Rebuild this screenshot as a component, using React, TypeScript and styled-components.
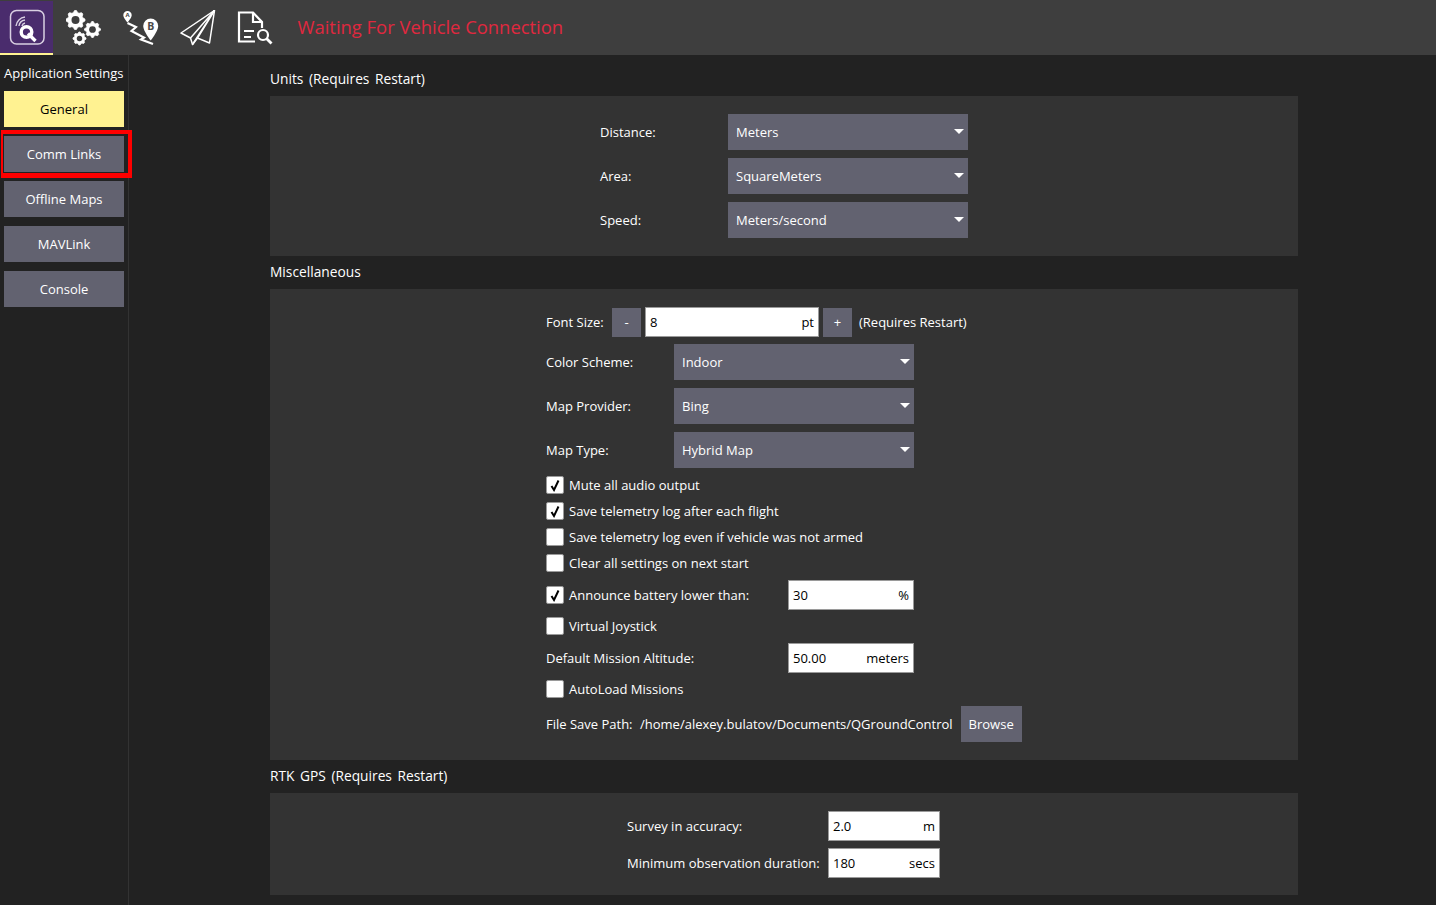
import React from 'react'
import styled, { createGlobalStyle } from 'styled-components'

const GlobalStyle = createGlobalStyle`
  html, body {
    margin: 0;
    padding: 0;
    height: 100%;
    overflow: hidden;
    background: #222222;
  }
  body {
    font-family: "Open Sans", "DejaVu Sans", sans-serif;
    font-size: 13px;
    color: #ffffff;
  }
  * {
    box-sizing: border-box;
  }
`

const LogoIcon = () => (
  <svg width="36" height="36" viewBox="0 0 36 36" fill="none">
    <rect x="1.500" y="1.500" width="33.500" height="33.500" rx="6" stroke="#d9d0e2" strokeWidth="1.500" />
    <circle cx="17.500" cy="23" r="5.300" stroke="#fff" strokeWidth="3.400" />
    <path d="M19 24.500l7.500 7.500" stroke="#fff" strokeWidth="3.400" />
    <path d="M7 17a10 10 0 0 1 9-9M10 17a7 7 0 0 1 6-6M13 17a4 4 0 0 1 3-3" stroke="#d9d0e2" strokeWidth="1.400" />
  </svg>
)

const gearPoints = (cx: number, cy: number, r: number, teeth: number) => {
  const out: string[] = []
  for (let i = 0; i < teeth * 4; i++) {
    const a = ((i - 0.5) / (teeth * 4)) * Math.PI * 2
    const rad = i % 4 < 2 ? r : r * 0.8
    out.push(`${(cx + Math.cos(a) * rad).toFixed(2)},${(cy + Math.sin(a) * rad).toFixed(2)}`)
  }
  return out.join(' ')
}

const Gear = ({ cx, cy, r }: { cx: number; cy: number; r: number }) => (
  <>
    <polygon points={gearPoints(cx, cy, r, 8)} fill="#fff" stroke="#fff" strokeWidth="0.800" strokeLinejoin="round" />
    <circle cx={cx} cy={cy} r={r * 0.42} fill="#3e3e3e" />
  </>
)

const GearsIcon = () => (
  <svg width="36" height="36" viewBox="0 0 36 36">
    <Gear cx={9.500} cy={10} r={9.500} />
    <Gear cx={26.500} cy={19.500} r={8} />
    <Gear cx={13.500} cy={28.500} r={6.500} />
  </svg>
)

const PlanIcon = () => (
  <svg width="36" height="36" viewBox="0 0 36 36" fill="none">
    <path d="M4.500 1a4.200 4.200 0 0 1 4.200 4.200c0 2.500-4.200 7.300-4.200 7.300S.3 7.700.3 5.200A4.200 4.200 0 0 1 4.500 1z" fill="#fff" />
    <text x="4.500" y="7.300" fontFamily="Open Sans" fontSize="6" fontWeight="700" fill="#3e3e3e" textAnchor="middle">A</text>
    <path d="M4.500 13l8.500 4-4.500 4 12.500 6.500-3 2 12 4.500" stroke="#fff" strokeWidth="2.200" />
    <path d="M27.700 8.500a7.500 7.500 0 0 1 7.500 7.500c0 5-7.500 14.500-7.500 14.500S20.200 21 20.200 16a7.500 7.500 0 0 1 7.500-7.500z" fill="#fff" />
    <text x="27.700" y="20.300" fontFamily="Open Sans" fontSize="10.500" fontWeight="700" fill="#4a4a4a" textAnchor="middle">B</text>
  </svg>
)

const PlaneIcon = () => (
  <svg width="36" height="36" viewBox="0 0 36 36" fill="none" stroke="#fff" strokeWidth="1.500" strokeLinejoin="round">
    <path d="M34.500 .5L1 23l9.500 5 2 6.500 5-6.500 12 5z" />
    <path d="M34.500 .5L10.500 28M34.500 .5L12.500 34.500M34.500 .5L17.500 28" />
  </svg>
)

const LogIcon = () => (
  <svg width="36" height="36" viewBox="0 0 36 36" fill="none" stroke="#fff" strokeWidth="2.200">
    <path d="M18 31.500H2V2.500H16L25 12V18" />
    <path d="M16 3V12H25" />
    <path d="M7 21H17M7 27H14" />
    <circle cx="26" cy="25" r="5" />
    <path d="M29.500 28.500L34.500 33.500" strokeWidth="2.800" />
  </svg>
)

const Page = styled.div`
  display: flex;
  flex-direction: column;
  width: 1436px;
  height: 905px;
  overflow: hidden;
`

const Toolbar = styled.div`
  display: flex;
  align-items: center;
  height: 55px;
  flex: none;
  background: #3e3e3e;
`

const LogoButton = styled.div`
  display: flex;
  align-items: center;
  justify-content: center;
  width: 53px;
  height: 54px;
  margin-top: 1px;
  background: #4a2c6d;
  border-bottom: 2px solid #fff291;
`

const ToolButton = styled.div`
  display: flex;
  align-items: center;
  justify-content: center;
  width: 36px;
  height: 36px;
  margin-left: 21px;
  &:nth-child(2) {
    margin-left: 13px;
  }
`

const Status = styled.div`
  margin: -2px 0 0 24.500px;
  font-size: 18.400px;
  color: #e0283e;
`

const Main = styled.div`
  display: flex;
  flex: 1;
  min-height: 0;
`

const Sidebar = styled.div`
  position: relative;
  display: flex;
  flex-direction: column;
  gap: 9px;
  width: 129px;
  flex: none;
  padding: 10px 4px 0;
  border-right: 1px solid #333333;
`

const SidebarTitle = styled.div`
  height: 17px;
  line-height: 17px;
  white-space: nowrap;
`

const NavButton = styled.div<{ $active?: boolean }>`
  display: flex;
  align-items: center;
  justify-content: center;
  width: 120px;
  height: 36px;
  background: ${p => (p.$active ? '#fff291' : '#626270')};
  color: ${p => (p.$active ? '#000000' : '#ffffff')};
`

const Highlight = styled.div`
  position: absolute;
  left: 1px;
  top: 75px;
  width: 131px;
  height: 48px;
  border: 3px solid #ff0000;
  border-width: 4px 4px 5px 2px;
  pointer-events: none;
`

const Content = styled.div`
  display: flex;
  flex-direction: column;
  width: 1028px;
  margin-left: 141px;
  padding-top: 8px;
`

const SectionTitle = styled.div`
  height: 18px;
  margin: 7px 0 8px;
  line-height: 18px;
  font-size: 13.750px;
  word-spacing: 2px;
`

const Panel = styled.div<{ $bottom?: number }>`
  display: flex;
  flex-direction: column;
  align-items: center;
  background: #333333;
  padding: 18px 0 ${p => p.$bottom ?? 18}px;
`

const Stack = styled.div<{ $gap: number; $width?: number; $shift?: number }>`
  display: flex;
  flex-direction: column;
  gap: ${p => p.$gap}px;
  width: ${p => (p.$width ? `${p.$width}px` : 'auto')};
  margin-left: ${p => p.$shift ?? 0}px;
`

const Row = styled.div<{ $gap?: number; $tight?: boolean }>`
  display: flex;
  align-items: center;
  gap: ${p => p.$gap ?? 0}px;
  margin-top: ${p => (p.$tight ? -1 : 0)}px;
`

const Label = styled.div<{ $width?: number; $ml?: number }>`
  width: ${p => (p.$width ? `${p.$width}px` : 'auto')};
  margin-left: ${p => p.$ml ?? 0}px;
  flex: none;
  white-space: nowrap;
`

const ComboBox = styled.div`
  display: flex;
  align-items: center;
  justify-content: space-between;
  width: 240px;
  height: 36px;
  padding: 0 4px 0 8px;
  background: #626270;
`

const Caret = styled.div`
  width: 0;
  height: 0;
  margin-top: -2px;
  border-left: 5.500px solid transparent;
  border-right: 5.500px solid transparent;
  border-top: 5px solid #ffffff;
`

const Combo = ({ value }: { value: string }) => (
  <ComboBox>
    {value}
    <Caret />
  </ComboBox>
)

const FieldBox = styled.div<{ $width: number }>`
  display: flex;
  align-items: center;
  justify-content: space-between;
  width: ${p => p.$width}px;
  height: 30px;
  padding: 0 4px;
  background: #ffffff;
  border: 1px solid #9a9a9a;
  color: #000000;
`

const Field = ({ width, value, unit }: { width: number; value: string; unit: string }) => (
  <FieldBox $width={width}>
    <span>{value}</span>
    <span>{unit}</span>
  </FieldBox>
)

const StepButton = styled.div`
  display: flex;
  align-items: center;
  justify-content: center;
  width: 29px;
  height: 29px;
  background: #626270;
`

const Browse = styled.div`
  display: flex;
  align-items: center;
  justify-content: center;
  width: 61px;
  height: 36px;
  margin-left: 8px;
  background: #626270;
`

const CheckRow = styled.div<{ $tight?: boolean }>`
  display: flex;
  align-items: center;
  gap: 5px;
  height: 18px;
  margin-top: ${p => (p.$tight ? -1 : 0)}px;
`

const Box = styled.div`
  display: flex;
  align-items: center;
  justify-content: center;
  width: 18px;
  height: 18px;
  flex: none;
  background: #ffffff;
  border: 1px solid #9a9a9a;
  border-radius: 2px;
`

const Check = ({ on, tight, children }: { on?: boolean; tight?: boolean; children: React.ReactNode }) => (
  <CheckRow $tight={tight}>
    <Box>
      {on && (
        <svg width="12" height="13" viewBox="0 0 12 13" fill="none">
          <path d="M2.500 7l2.500 4L9.500 1.500" stroke="#000" strokeWidth="2" />
        </svg>
      )}
    </Box>
    {children}
  </CheckRow>
)

export default function App() {
  return (
    <Page>
      <GlobalStyle />
      <Toolbar>
        <LogoButton>
          <LogoIcon />
        </LogoButton>
        <ToolButton><GearsIcon /></ToolButton>
        <ToolButton><PlanIcon /></ToolButton>
        <ToolButton><PlaneIcon /></ToolButton>
        <ToolButton><LogIcon /></ToolButton>
        <Status>Waiting For Vehicle Connection</Status>
      </Toolbar>
      <Main>
        <Sidebar>
          <SidebarTitle>Application Settings</SidebarTitle>
          <NavButton $active>General</NavButton>
          <NavButton>Comm Links</NavButton>
          <NavButton>Offline Maps</NavButton>
          <NavButton>MAVLink</NavButton>
          <NavButton>Console</NavButton>
          <Highlight />
        </Sidebar>
        <Content>
          <SectionTitle>Units (Requires Restart)</SectionTitle>
          <Panel>
            <Stack $gap={8}>
              <Row><Label $width={128}>Distance:</Label><Combo value="Meters" /></Row>
              <Row><Label $width={128}>Area:</Label><Combo value="SquareMeters" /></Row>
              <Row><Label $width={128}>Speed:</Label><Combo value="Meters/second" /></Row>
            </Stack>
          </Panel>
          <SectionTitle>Miscellaneous</SectionTitle>
          <Panel>
            <Stack $gap={8} $width={476}>
              <Row $gap={4}>
                <Label $width={62}>Font Size:</Label>
                <StepButton>-</StepButton>
                <Field width={174} value="8" unit="pt" />
                <StepButton>+</StepButton>
                <Label $ml={3}>(Requires Restart)</Label>
              </Row>
              <Row $tight><Label $width={128}>Color Scheme:</Label><Combo value="Indoor" /></Row>
              <Row><Label $width={128}>Map Provider:</Label><Combo value="Bing" /></Row>
              <Row><Label $width={128}>Map Type:</Label><Combo value="Hybrid Map" /></Row>
              <Check on>Mute all audio output</Check>
              <Check on>Save telemetry log after each flight</Check>
              <Check>Save telemetry log even if vehicle was not armed</Check>
              <Check>Clear all settings on next start</Check>
              <Row>
                <Label $width={242}><Check on>Announce battery lower than:</Check></Label>
                <Field width={126} value="30" unit="%" />
              </Row>
              <Check tight>Virtual Joystick</Check>
              <Row>
                <Label $width={242}>Default Mission Altitude:</Label>
                <Field width={126} value="50.00" unit="meters" />
              </Row>
              <Check tight>AutoLoad Missions</Check>
              <Row>
                <Label $width={94}>File Save Path:</Label>
                <Label>/home/alexey.bulatov/Documents/QGroundControl</Label>
                <Browse>Browse</Browse>
              </Row>
            </Stack>
          </Panel>
          <SectionTitle>RTK GPS (Requires Restart)</SectionTitle>
          <Panel $bottom={17}>
            <Stack $gap={7} $shift={-1}>
              <Row><Label $width={201}>Survey in accuracy:</Label><Field width={112} value="2.0" unit="m" /></Row>
              <Row><Label $width={201}>Minimum observation duration:</Label><Field width={112} value="180" unit="secs" /></Row>
            </Stack>
          </Panel>
        </Content>
      </Main>
    </Page>
  )
}
